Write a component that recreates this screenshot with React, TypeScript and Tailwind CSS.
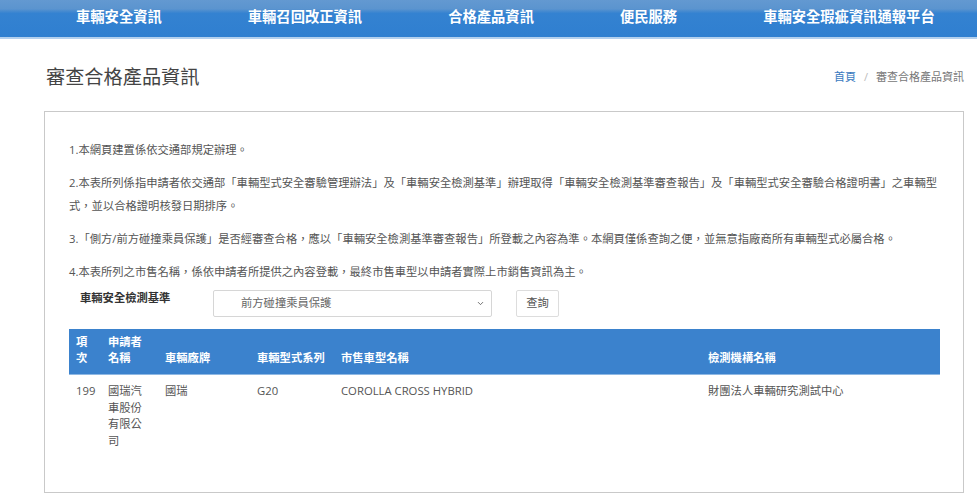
import { ChevronDown } from "lucide-react";

const navItems = ["車輛安全資訊", "車輛召回改正資訊", "合格產品資訊", "便民服務", "車輛安全瑕疵資訊通報平台"];

const notes = [
    "1.本網頁建置係依交通部規定辦理。",
    "2.本表所列係指申請者依交通部「車輛型式安全審驗管理辦法」及「車輛安全檢測基準」辦理取得「車輛安全檢測基準審查報告」及「車輛型式安全審驗合格證明書」之車輛型式，並以合格證明核發日期排序。",
    "3.「側方/前方碰撞乘員保護」是否經審查合格，應以「車輛安全檢測基準審查報告」所登載之內容為準。本網頁僅係查詢之便，並無意指廠商所有車輛型式必屬合格。",
    "4.本表所列之市售名稱，係依申請者所提供之內容登載，最終市售車型以申請者實際上市銷售資訊為主。",
];

const columns = [
    { label: "項次", width: "w-[32px]" },
    { label: "申請者名稱", width: "w-[57px]" },
    { label: "車輛廠牌", width: "w-[92px]" },
    { label: "車輛型式系列", width: "w-[84px]" },
    { label: "市售車型名稱", width: "w-[367px]" },
    { label: "檢測機構名稱", width: "w-[239px]" },
];

const rows = [["199", "國瑞汽車股份有限公司", "國瑞", "G20", "COROLLA CROSS HYBRID", "財團法人車輛研究測試中心"]];

export default function App() {
    return (
        <div className="w-[977px] h-[498px] overflow-hidden bg-white font-['Open_Sans','Noto_Sans_CJK_TC',sans-serif] text-[#555]">
            {/* top nav */}
            <div className="h-[39px] bg-[linear-gradient(to_bottom,#6399d1_0%,#5b94cf_24%,#3482d1_36%,#2f7fd0_100%)] border-b-2 border-[#b3d0ee]">
                <div className="flex gap-[86px] pl-[76px] h-full items-center">
                    {navItems.map((item) => (
                        <span key={item} className="text-white text-[14.3px] font-bold leading-none pb-[2px]">
                            {item}
                        </span>
                    ))}
                </div>
            </div>

            {/* title + breadcrumb */}
            <div className="flex justify-between items-center pl-[46px] pr-[13px] pt-[25px]">
                <h1 className="text-[19.2px] leading-[26px] text-[#444]">審查合格產品資訊</h1>
                <div className="text-[11px] leading-[16px] flex items-center gap-[8px]">
                    <span className="text-[#3a7abf]">首頁</span>
                    <span className="text-[#bbb]">/</span>
                    <span className="text-[#777]">審查合格產品資訊</span>
                </div>
            </div>

            {/* panel */}
            <div className="ml-[44px] mt-[21px] w-[920px] h-[382px] border border-[#c9c9c9] pt-[26px] pl-[24px] pr-[21px]">
                {notes.map((n, i) => (
                    <p key={i} className={`text-[11.3px] leading-[23px] ${i === notes.length - 1 ? "mb-[7px]" : "mb-[10px]"}`}>
                        {n}
                    </p>
                ))}

                <div className="flex items-start">
                    <label className="w-[144px] pl-[11px] text-[11.3px] leading-[16px] font-bold text-[#333]">車輛安全檢測基準</label>
                    <div className="w-[279px] h-[27px] border border-[#d6d6d6] rounded-[2px] flex items-center justify-between pl-[27px] pr-[6px] text-[11.3px] text-[#666]">
                        <span>前方碰撞乘員保護</span>
                        <ChevronDown size={9} strokeWidth={2.2} className="text-[#555]" />
                    </div>
                    <button className="ml-[24px] w-[43px] h-[27px] border border-[#ddd] rounded-[2px] text-[11.3px] text-[#555] bg-white">
                        查詢
                    </button>
                </div>

                <table className="mt-[12px] w-[871px] table-fixed border-collapse text-[11.3px]">
                    <thead>
                        <tr className="bg-[#3b82cd] border-b border-[#8fb8e3]">
                            {columns.map((c) => (
                                <th
                                    key={c.label}
                                    className={`${c.width} align-bottom text-left font-bold text-white leading-[16px] pl-[7px] pr-[8px] pt-[5px] pb-[8px]`}
                                >
                                    {c.label}
                                </th>
                            ))}
                        </tr>
                    </thead>
                    <tbody>
                        {rows.map((r) => (
                            <tr key={r[0]}>
                                {r.map((cell, j) => (
                                    <td key={j} className="align-top leading-[16.5px] pl-[7px] pr-[8px] pt-[8px] pb-[8px]">
                                        {cell}
                                    </td>
                                ))}
                            </tr>
                        ))}
                    </tbody>
                </table>
            </div>
        </div>
    );
}
